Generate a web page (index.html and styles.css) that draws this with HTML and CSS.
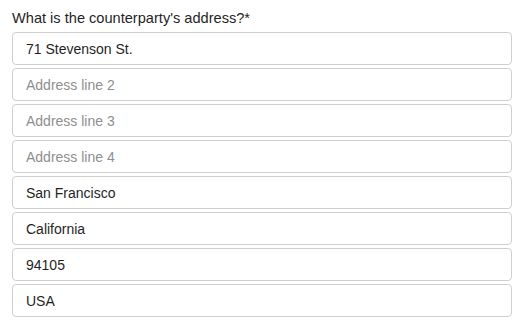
FILE: index.html
```html
<!DOCTYPE html>
<html lang="en">
<head>
<meta charset="utf-8">
<title>Address</title>
<link rel="stylesheet" href="styles.css">
</head>
<body>
<form class="address-form">
  <label class="question" for="line1">What is the counterparty's address?*</label>
  <div class="fields">
    <input class="field" id="line1" type="text" value="71 Stevenson St.">
    <input class="field" type="text" placeholder="Address line 2">
    <input class="field" type="text" placeholder="Address line 3">
    <input class="field" type="text" placeholder="Address line 4">
    <input class="field" type="text" value="San Francisco">
    <input class="field" type="text" value="California">
    <input class="field" type="text" value="94105">
    <input class="field" type="text" value="USA">
  </div>
</form>
</body>
</html>
```

FILE: styles.css
```css
html, body {
  margin: 0;
  padding: 0;
  background: #ffffff;
}

body {
  font-family: "Liberation Sans", Arial, sans-serif;
  color: #1f1f1f;
}

.address-form {
  display: flex;
  flex-direction: column;
  width: 500px;
  padding: 10px 0 0 12px;
}

.question {
  display: block;
  font-size: 14.6px;
  line-height: 17px;
  height: 22px;
  color: #1f1f1f;
}

.fields {
  display: flex;
  flex-direction: column;
  gap: 3px;
}

.field {
  box-sizing: border-box;
  height: 33px;
  width: 100%;
  margin: 0;
  padding: 0 13px;
  border: 1px solid #cfcfcf;
  border-radius: 4px;
  background: #ffffff;
  font-family: "Liberation Sans", Arial, sans-serif;
  font-size: 14px;
  color: #1f1f1f;
  outline: none;
}

.field::placeholder {
  color: #8e8e8e;
  opacity: 1;
}
```
